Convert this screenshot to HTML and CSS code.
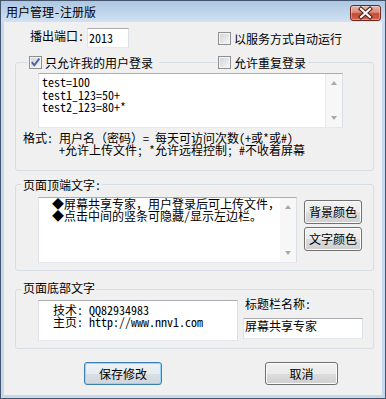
FILE: index.html
```html
<!DOCTYPE html>
<html lang="zh-CN">
<head>
  <meta charset="UTF-8">
  <title>用户管理-注册版</title>
  <link rel="stylesheet" href="styles.css">
</head>
<body>

  <div class="window">
    <div class="titlebar">
      <span class="title">用户管理-注册版</span>
      <span class="close-btn">
        <svg width="31" height="16" viewBox="0 0 31 16">
          <path d="M11 4 L20 12 M20 4 L11 12" stroke="#4a1e16" stroke-width="4.2" stroke-linecap="square"/>
          <path d="M11 4 L20 12 M20 4 L11 12" stroke="#ffffff" stroke-width="2.2" stroke-linecap="square"/>
        </svg>
      </span>
    </div>

    <div class="client">
      <div class="top-row">
        <span class="port-label">播出端口:</span>
        <div class="textbox port-input">2013</div>
        <label class="chk svc"><span class="box"></span>以服务方式自动运行</label>
      </div>

      <!-- 用户列表 -->
      <div class="group group-users">
        <div class="group-head">
          <label class="chk mask only-mine">
            <span class="box">
              <svg width="11" height="11" viewBox="0 0 11 11">
                <path d="M1.8 5.2 L4.3 8.3 L9.3 1.6" fill="none" stroke="#4b5f9e" stroke-width="1.9"/>
              </svg>
            </span>只允许我的用户登录
          </label>
          <label class="chk mask repeat"><span class="box"></span>允许重复登录</label>
        </div>
        <div class="textbox area users-box">
          <div class="area-text mono">
            <div class="line">test=100</div>
            <div class="line">test1_123=50+</div>
            <div class="line">test2_123=80+*</div>
          </div>
          <div class="scrollbar"><span class="arrow-up"></span><span class="arrow-down"></span></div>
        </div>
        <div class="format">
          <div class="line">格式: 用户名（密码）= 每天可访问次数(+或*或#)</div>
          <div class="line indent">+允许上传文件; *允许远程控制; #不收着屏幕</div>
        </div>
      </div>

      <!-- 顶端文字 -->
      <div class="group group-top">
        <div class="group-head">
          <span class="legend mask">页面顶端文字:</span>
        </div>
        <div class="group-body">
          <div class="textbox area top-box">
            <div class="area-text note">
              <div class="line">◆屏幕共享专家，用户登录后可上传文件，</div>
              <div class="line">◆点击中间的竖条可隐藏/显示左边栏。</div>
            </div>
            <div class="scrollbar"><span class="arrow-up"></span><span class="arrow-down"></span></div>
          </div>
          <div class="color-btns">
            <button class="btn">背景颜色</button>
            <button class="btn">文字颜色</button>
          </div>
        </div>
      </div>

      <!-- 底部文字 -->
      <div class="group group-bottom">
        <div class="group-head">
          <span class="legend mask">页面底部文字</span>
        </div>
        <div class="group-body">
          <div class="textbox area bottom-box">
            <div class="area-text note">
              <div class="line">技术: QQ82934983</div>
              <div class="line">主页: http://www.nnv1.com</div>
            </div>
          </div>
          <div class="caption-col">
            <span class="caption-label">标题栏名称:</span>
            <div class="textbox caption-input">屏幕共享专家</div>
          </div>
        </div>
      </div>

      <div class="actions">
        <button class="btn btn-default save">保存修改</button>
        <button class="btn cancel">取消</button>
      </div>
    </div>
  </div>

</body>
</html>
```

FILE: styles.css
```css
/* Estilos gerais */
* {
  box-sizing: border-box;
}

body {
  margin: 0;
  font-family: "Noto Sans Mono CJK SC", "Noto Sans CJK SC", sans-serif;
  font-size: 12px;
  line-height: 12px;
  color: #000;
}

/* moldura da janela */
.window {
  width: 386px;
  height: 399px;
  border: 1px solid #44556b;
  background-color: #c6d9ee;
  display: flex;
  flex-direction: column;
}

.titlebar {
  height: 21px;
  flex: none;
  display: flex;
  justify-content: space-between;
  align-items: flex-start;
  padding: 5px 4px 0 5px;
  background: linear-gradient(#aec7e2, #c2d6ec 60%, #d2e1f2);
}

.close-btn {
  width: 31px;
  height: 16px;
  margin-top: -1px;
  border: 1px solid #6b2a20;
  border-radius: 3px;
  background: linear-gradient(#eab4a8, #d98a79 45%, #c84a33 55%, #d0634a);
  box-shadow: inset 0 0 0 1px rgba(255, 255, 255, 0.35);
  display: flex;
}

.close-btn svg {
  margin: -1px;
}

.client {
  height: 373px;
  flex: none;
  margin: 0 3px;
  background-color: #f0f0f0;
}

.line {
  height: 12px;
  white-space: nowrap;
}

/* campos */
.textbox {
  background-color: #fff;
  border: 1px solid;
  border-color: #abadb3 #dbdfe6 #e3e9ef #e2e3ea;
}

.top-row {
  height: 40px;
  display: flex;
  align-items: flex-start;
  padding: 6px 0 0 26px;
}

.port-label {
  width: 57px;
  margin-top: 2px;
}

.port-input {
  width: 42px;
  height: 20px;
  padding: 0 0 0 1px;
  line-height: 17px;
}

.chk {
  display: flex;
  align-items: center;
  gap: 3px;
  line-height: 13px;
  height: 13px;
}

.box {
  width: 13px;
  height: 13px;
  flex: none;
  border: 1px solid #8e8f8f;
  background: linear-gradient(135deg, #cfd1d4, #f7f7f7);
  box-shadow: inset 0 0 0 1px #f4f4f4;
}

.box svg {
  display: block;
}

.svc {
  margin: 4px 0 0 89px;
}

/* group box */
.group {
  margin: 0 8px 0 11px;
  border: 1px solid #d5dfe5;
  border-radius: 3px;
}

.group-head {
  display: flex;
}

.mask {
  background-color: #f0f0f0;
}

.group-users {
  height: 109px;
}

.group-users .group-head {
  margin-top: -7px;
  padding-left: 12px;
}

.only-mine {
  padding: 0 6px 0 1px;
}

.repeat {
  margin-left: 58px;
  padding: 0 2px 0 1px;
}

.area {
  display: flex;
}

.area-text {
  flex: 1;
  min-width: 0;
}

.users-box {
  width: 305px;
  height: 55px;
  margin: 4px 0 0 22px;
}

.users-box .area-text {
  padding: 2px 3px;
}

.users-box .line {
  height: 12.5px;
}

.scrollbar {
  width: 17px;
  flex: none;
  background-color: #f7f7f7;
  border-left: 1px solid #ececec;
  display: flex;
  flex-direction: column;
  justify-content: space-between;
  align-items: center;
  padding: 7px 0;
}

.arrow-up,
.arrow-down {
  width: 0;
  height: 0;
  border-left: 3.5px solid transparent;
  border-right: 3.5px solid transparent;
}

.arrow-up {
  border-bottom: 4px solid #a9a9a9;
}

.arrow-down {
  border-top: 4px solid #a9a9a9;
}

.format {
  margin-top: 4px;
  padding-left: 7px;
}

.indent {
  padding-left: 36px;
}

.legend {
  margin-left: 5px;
  padding: 0 1px 0 2px;
}

.group-body {
  display: flex;
  align-items: flex-start;
  margin-top: 6px;
  padding-left: 22px;
}

.group-top {
  height: 87px;
  margin-top: 13px;
}

.group-top .group-head {
  margin-top: -6px;
}

.top-box {
  width: 259px;
  height: 66px;
}

.top-box .scrollbar {
  width: 16px;
  border-left: 0;
}

.note {
  padding-left: 14px;
}

.top-box .note {
  padding-left: 13px;
}

.color-btns {
  display: flex;
  flex-direction: column;
  gap: 3px;
  margin: 3px 0 0 7px;
}

.color-btns .btn {
  width: 58px;
  height: 24px;
}

.group-bottom {
  height: 60px;
  margin-top: 18px;
}

.group-bottom .group-head {
  margin-top: -8px;
}

.bottom-box {
  width: 200px;
  height: 41px;
}

.bottom-box .note {
  padding-top: 3px;
}

.caption-col {
  display: flex;
  flex-direction: column;
  margin: -2px 0 0 5px;
}

.caption-label {
  padding-left: 2px;
}

.caption-input {
  width: 120px;
  height: 21px;
  margin-top: 8px;
  padding: 1px 0 0 1px;
}

/* botoes */
.btn {
  font-family: inherit;
  font-size: 12px;
  line-height: 12px;
  color: #000;
  padding: 0;
  border: 1px solid #707070;
  border-radius: 3px;
  background: linear-gradient(#f2f2f2, #ebebeb 50%, #dddddd 50%, #cfcfcf);
  box-shadow: inset 0 0 0 1px #fcfcfc;
  display: flex;
  align-items: center;
  justify-content: center;
}

.btn-default {
  border-color: #3c7fb1;
  box-shadow: inset 0 0 0 1px #92d6f5;
  background: linear-gradient(#eef3f7, #e6ebef 50%, #d9dfe4 50%, #cfd6dc);
}

.actions {
  display: flex;
  margin-top: 13px;
  padding-left: 80px;
}

.save {
  width: 78px;
  height: 23px;
}

.cancel {
  width: 73px;
  height: 23px;
  margin-left: 103px;
}
```
